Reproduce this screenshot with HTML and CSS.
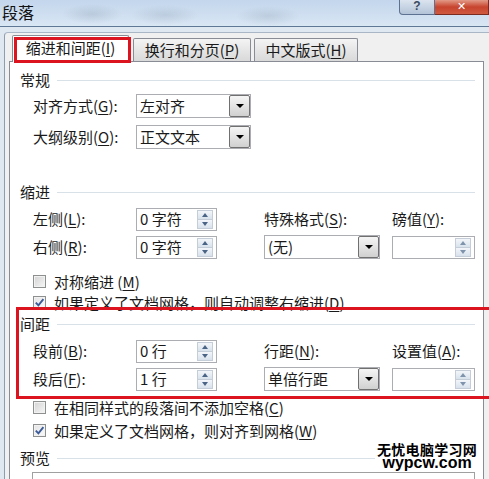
FILE: index.html
```html
<!DOCTYPE html>
<html lang="zh-CN">
<head>
    <meta charset="UTF-8">
    <meta name="viewport" content="width=device-width, initial-scale=1.0">
    <title>段落</title>
    <link rel="stylesheet" href="styles.css">
</head>
<body>
    <div class="titlebar">
        <div class="title">段落</div>
        <div class="caption-buttons">
            <div class="btn-help">?</div>
            <div class="btn-close">✕</div>
        </div>
    </div>

    <div class="client">
        <div class="tabs">
            <div class="tab active">缩进和间距(<u>I</u>)</div>
            <div class="tab tab-2">换行和分页(<u>P</u>)</div>
            <div class="tab tab-3">中文版式(<u>H</u>)</div>
        </div>

        <div class="panel">
            <!-- 常规 -->
            <div class="group-title">常规</div>
            <div class="form-grid general">
                <div class="label">对齐方式(<u>G</u>):</div>
                <div class="combo wide"><span class="text">左对齐</span><span class="drop"></span></div>
                <div class="label">大纲级别(<u>O</u>):</div>
                <div class="combo wide"><span class="text">正文文本</span><span class="drop"></span></div>
            </div>

            <!-- 缩进 -->
            <div class="group-title indent-title">缩进</div>
            <div class="form-grid indent">
                <div class="label">左侧(<u>L</u>):</div>
                <div class="spin"><span class="value">0 字符</span><span class="arrows"><i class="up"></i><i class="down"></i></span></div>
                <div class="label">特殊格式(<u>S</u>):</div>
                <div class="label">磅值(<u>Y</u>):</div>

                <div class="label">右侧(<u>R</u>):</div>
                <div class="spin"><span class="value">0 字符</span><span class="arrows"><i class="up"></i><i class="down"></i></span></div>
                <div class="combo"><span class="text">(无)</span><span class="drop"></span></div>
                <div class="spin long disabled"><span class="value"></span><span class="arrows"><i class="up"></i><i class="down"></i></span></div>
            </div>

            <div class="check-row first"><span class="check"></span><span>对称缩进 (<u>M</u>)</span></div>
            <div class="check-row tight"><span class="check on"><svg viewBox="0 0 11 11" width="11" height="11"><path d="M1.8 5.6 L4.4 8.4 L9.4 2.2" fill="none" stroke="#3b5a98" stroke-width="1.9"/></svg></span><span>如果定义了文档网格，则自动调整右缩进(<u>D</u>)</span></div>

            <!-- 间距 -->
            <div class="group-title spacing-title">间距</div>
            <div class="form-grid spacing">
                <div class="label">段前(<u>B</u>):</div>
                <div class="spin"><span class="value">0 行</span><span class="arrows"><i class="up"></i><i class="down"></i></span></div>
                <div class="label">行距(<u>N</u>):</div>
                <div class="label">设置值(<u>A</u>):</div>

                <div class="label">段后(<u>F</u>):</div>
                <div class="spin"><span class="value">1 行</span><span class="arrows"><i class="up"></i><i class="down"></i></span></div>
                <div class="combo"><span class="text">单倍行距</span><span class="drop"></span></div>
                <div class="spin long disabled"><span class="value"></span><span class="arrows"><i class="up"></i><i class="down"></i></span></div>
            </div>

            <div class="check-row after-spacing"><span class="check"></span><span>在相同样式的段落间不添加空格(<u>C</u>)</span></div>
            <div class="check-row snug"><span class="check on"><svg viewBox="0 0 11 11" width="11" height="11"><path d="M1.8 5.6 L4.4 8.4 L9.4 2.2" fill="none" stroke="#3b5a98" stroke-width="1.9"/></svg></span><span>如果定义了文档网格，则对齐到网格(<u>W</u>)</span></div>

            <!-- 预览 -->
            <div class="group-title preview-title">预览</div>
            <div class="preview"></div>
        </div>
    </div>

    <div class="mark mark-tab"></div>
    <div class="mark mark-spacing"></div>

    <div class="watermark">
        <div class="wm-cn">无忧电脑学习网</div>
        <div class="wm-en">wypcw.com</div>
    </div>
</body>
</html>
```

FILE: styles.css
```css
* {
    box-sizing: border-box;
}

body {
    margin: 0;
    width: 489px;
    height: 479px;
    overflow: hidden;
    position: relative;
    background-color: #dfe7f1;
    font-family: "Noto Sans CJK SC", sans-serif;
    font-size: 15px;
    color: #1a1a1a;
}

u {
    text-decoration: underline;
    text-underline-offset: 2px;
}

/* title bar */
.titlebar {
    height: 27px;
    display: flex;
    justify-content: space-between;
    align-items: flex-start;
    border-bottom: 1px solid #5f7896;
    background:
        radial-gradient(ellipse 30px 10px at 92px 14px, rgba(110, 130, 150, 0.22), transparent),
        radial-gradient(ellipse 34px 10px at 165px 15px, rgba(110, 130, 150, 0.2), transparent),
        radial-gradient(ellipse 32px 10px at 268px 16px, rgba(110, 130, 150, 0.2), transparent),
        linear-gradient(#c3d6ec, #d9e6f4);
}

.title {
    padding: 2px 0 0 2px;
    font-size: 16px;
    line-height: 20px;
    color: #111;
}

.caption-buttons {
    display: flex;
}

.btn-help {
    width: 36px;
    height: 15px;
    border: 1px solid #5d7290;
    border-top: none;
    border-bottom-left-radius: 4px;
    background: linear-gradient(#dbe4ef, #b3c4d8);
    color: #3a4a60;
    font-family: "Liberation Sans", sans-serif;
    font-weight: bold;
    font-size: 12px;
    line-height: 13px;
    text-align: center;
}

.btn-close {
    width: 54px;
    height: 15px;
    border: 1px solid #7b2b1f;
    border-top: none;
    border-left: none;
    background: linear-gradient(#e29a88, #c7442e 50%, #cf5a3f);
    color: #fff;
    font-family: "DejaVu Sans", sans-serif;
    font-weight: bold;
    font-size: 11px;
    line-height: 13px;
    text-align: center;
}

/* dialog body */
.client {
    margin: 5px 0 0 4px;
    height: 447px;
    overflow: hidden;
    padding-left: 4px;
    border-left: 1px solid #8d9db1;
    border-top: 1px solid #a9b6c5;
    border-top-left-radius: 4px;
    background-color: #f0f0f0;
}

.tabs {
    display: flex;
    align-items: flex-end;
    height: 28px;
    padding-left: 3px;
}

.tab {
    height: 23px;
    display: flex;
    align-items: center;
    justify-content: center;
    line-height: 20px;
    border: 1px solid #898c95;
    border-bottom: none;
    border-radius: 2px 2px 0 0;
    background: linear-gradient(#f4f4f4, #e6e6e6 50%, #d9d9d9);
}

.tab.active {
    width: 117px;
    height: 27px;
    margin-bottom: -1px;
    position: relative;
    z-index: 1;
    padding-bottom: 2px;
    background: #fff;
}

.tab-2 {
    width: 118px;
    margin-left: 4px;
}

.tab-3 {
    width: 104px;
    margin-left: 3px;
}

.panel {
    width: 475px;
    height: 430px;
    padding: 8px 8px 0 10px;
    border: 1px solid #898c95;
    background-color: #fff;
}

/* section heading with rule */
.group-title {
    display: flex;
    align-items: center;
    gap: 7px;
    height: 20px;
    line-height: 20px;
}

.group-title::after {
    content: "";
    flex: 1;
    height: 1px;
    background-color: #d8e0e8;
}

.indent-title {
    margin-top: 33px;
}

.spacing-title {
    margin-top: 2px;
}

.preview-title {
    margin-top: 8px;
}

/* rows of fields */
.form-grid {
    display: grid;
    grid-template-columns: 103px 128px 128px 83px;
    grid-auto-rows: 24px;
    row-gap: 4px;
    align-items: center;
    margin-left: 13px;
    margin-top: 5px;
}

.form-grid.general {
    grid-template-columns: 103px 115px;
    row-gap: 7px;
    margin-top: 4px;
}

.label {
    line-height: 20px;
    white-space: nowrap;
}

.combo {
    display: flex;
    align-items: center;
    width: 116px;
    height: 24px;
    padding-left: 3px;
    border: 1px solid #abadb3;
    background-color: #fff;
}

.combo.wide {
    width: 115px;
}

.combo .text {
    flex: 1;
    line-height: 20px;
}

.combo .drop {
    width: 21px;
    height: 22px;
    display: flex;
    align-items: center;
    justify-content: center;
    border: 1px solid #707070;
    border-radius: 2px;
    background: linear-gradient(#f5f5f5, #e3e3e3 50%, #d0d0d0);
}

.combo .drop::after {
    content: "";
    border-left: 4px solid transparent;
    border-right: 4px solid transparent;
    border-top: 4px solid #000;
}

.spin {
    display: flex;
    align-items: center;
    width: 81px;
    height: 23px;
    padding: 0 3px;
    border: 1px solid #abadb3;
    background-color: #fff;
}

.spin.long {
    width: 83px;
}

.spin .value {
    flex: 1;
    line-height: 20px;
    white-space: pre;
}

.spin .arrows {
    width: 16px;
    height: 19px;
    display: flex;
    flex-direction: column;
}

.arrows i {
    flex: 1;
    display: flex;
    align-items: center;
    justify-content: center;
    border: 1px solid #c4cdd8;
    background: linear-gradient(#f3f6fa, #d8e2ec);
}

.arrows i + i {
    border-top: none;
}

.arrows .up::after {
    content: "";
    border-left: 3px solid transparent;
    border-right: 3px solid transparent;
    border-bottom: 4px solid #4a6486;
}

.arrows .down::after {
    content: "";
    border-left: 3px solid transparent;
    border-right: 3px solid transparent;
    border-top: 4px solid #4a6486;
}

.spin.disabled .arrows .up::after {
    border-bottom-color: #7f93ad;
}

.spin.disabled .arrows .down::after {
    border-top-color: #7f93ad;
}

/* checkboxes */
.check-row {
    display: flex;
    align-items: center;
    gap: 8px;
    height: 20px;
    margin-left: 13px;
    white-space: nowrap;
}

.check-row.first {
    margin-top: 12px;
}

.check-row.tight {
    margin-top: 1px;
}

.check-row.after-spacing {
    margin-top: 6px;
}

.check-row.snug {
    margin-top: 3px;
}

.check {
    width: 13px;
    height: 13px;
    display: flex;
    align-items: center;
    justify-content: center;
    border: 1px solid #8e8f8f;
    background: linear-gradient(135deg, #d3d3d3, #f6f6f6);
    box-shadow: inset 0 0 0 1px #f2f2f2;
}

.check.on {
    background: linear-gradient(135deg, #e4e4e4, #fafafa);
}

.preview {
    width: 443px;
    height: 20px;
    margin: 4px 0 0 12px;
    border: 1px solid #a0a0a0;
}

/* red annotation boxes */
.mark {
    position: absolute;
    border: 3px solid #dc1420;
    z-index: 5;
}

.mark-tab {
    left: 14px;
    top: 37px;
    width: 117px;
    height: 26px;
}

.mark-spacing {
    left: 16px;
    top: 307px;
    width: 490px;
    height: 92px;
}

/* watermark */
.watermark {
    position: absolute;
    left: 375px;
    top: 442px;
    padding: 0 2px 2px;
    background-color: #fff;
    text-align: center;
    color: #000;
    font-weight: bold;
    z-index: 6;
}

.wm-cn {
    font-size: 14px;
    letter-spacing: 0.3px;
    line-height: 15px;
}

.wm-en {
    font-family: "Liberation Sans", Arial, sans-serif;
    font-size: 16px;
    line-height: 12px;
}
```
